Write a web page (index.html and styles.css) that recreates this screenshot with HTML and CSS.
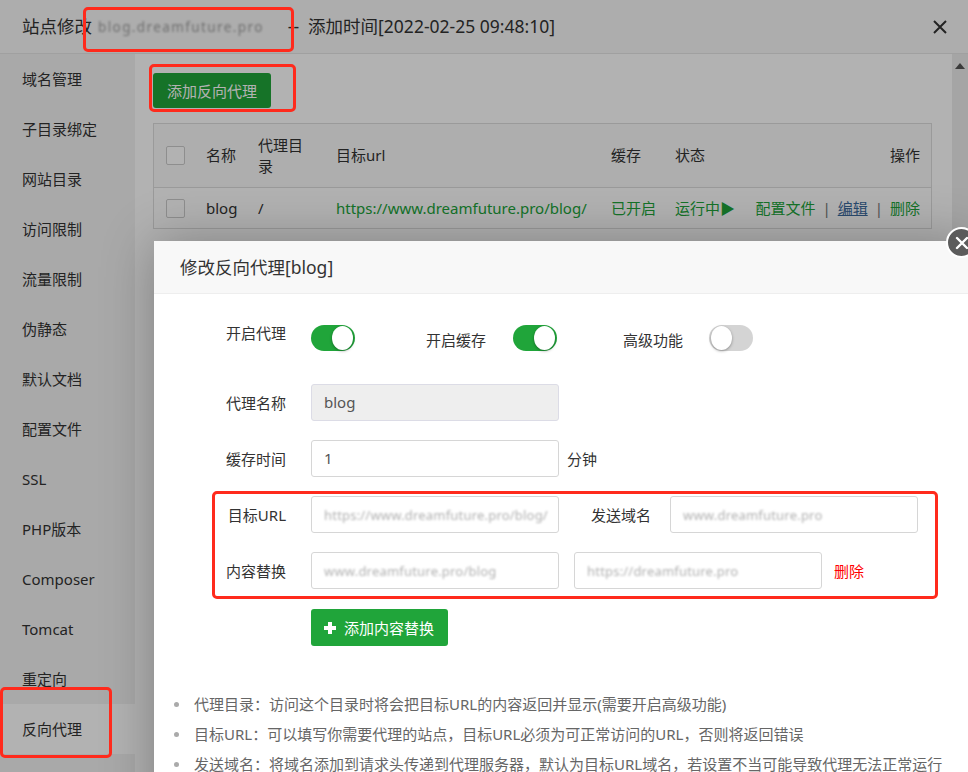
FILE: index.html
```html
<!DOCTYPE html>
<html lang="zh-CN">
<head>
<meta charset="utf-8">
<title>站点修改 - 反向代理</title>
<link rel="stylesheet" href="styles.css">
</head>
<body>
<div class="site-dialog">
  <header class="dlg-head">
    <span class="dlg-title">站点修改<span class="blur head-blur">blog.dreamfuture.pro</span>--<span class="gap"></span>添加时间[2022-02-25 09:48:10]</span>
    <svg class="dlg-close" width="16" height="16" viewBox="0 0 16 16"><path d="M2 2L14 14M14 2L2 14" stroke="#333" stroke-width="2" fill="none"/></svg>
  </header>
  <div class="dlg-main">
    <nav class="side">
      <div class="side-item">域名管理</div>
      <div class="side-item">子目录绑定</div>
      <div class="side-item">网站目录</div>
      <div class="side-item">访问限制</div>
      <div class="side-item">流量限制</div>
      <div class="side-item">伪静态</div>
      <div class="side-item">默认文档</div>
      <div class="side-item">配置文件</div>
      <div class="side-item">SSL</div>
      <div class="side-item">PHP版本</div>
      <div class="side-item">Composer</div>
      <div class="side-item">Tomcat</div>
      <div class="side-item">重定向</div>
      <div class="side-item active">反向代理</div>
    </nav>
    <section class="content">
      <button class="btn-green">添加反向代理</button>
      <div class="table">
        <div class="tr th">
          <div class="td"><span class="chk"></span></div>
          <div class="td">名称</div>
          <div class="td">代理目录</div>
          <div class="td">目标url</div>
          <div class="td">缓存</div>
          <div class="td">状态</div>
          <div class="td right">操作</div>
        </div>
        <div class="tr">
          <div class="td"><span class="chk"></span></div>
          <div class="td">blog</div>
          <div class="td">/</div>
          <div class="td green">https://www.dreamfuture.pro/blog/</div>
          <div class="td green">已开启</div>
          <div class="td green">运行中▶</div>
          <div class="td right"><span class="green">配置文件</span><span class="sep">|</span><span class="link">编辑</span><span class="sep">|</span><span class="green">删除</span></div>
        </div>
      </div>
    </section>
    <div class="scrollbar"><span class="sb-arrow"></span></div>
  </div>
</div>

<div class="shade"></div>

<div class="modal">
  <span class="modal-close"><svg width="14" height="14" viewBox="0 0 14 14"><path d="M2 2L12 12M12 2L2 12" stroke="#fff" stroke-width="2.4" fill="none" stroke-linecap="round"/></svg></span>
  <div class="modal-head">修改反向代理[blog]</div>
  <div class="modal-body">
    <div class="switch-row">
      <span class="sw-label first">开启代理</span>
      <span class="switch on"><span class="knob"></span></span>
      <span class="sw-label">开启缓存</span>
      <span class="switch on"><span class="knob"></span></span>
      <span class="sw-label">高级功能</span>
      <span class="switch off"><span class="knob"></span></span>
    </div>
    <div class="form-row">
      <label class="f-label">代理名称</label>
      <div class="input disabled">blog</div>
    </div>
    <div class="form-row">
      <label class="f-label">缓存时间</label>
      <div class="input">1</div>
      <span class="unit">分钟</span>
    </div>
    <div class="form-row">
      <label class="f-label">目标URL</label>
      <div class="input"><span class="blur in-blur">https://www.dreamfuture.pro/blog/</span></div>
      <label class="f-label2">发送域名</label>
      <div class="input"><span class="blur in-blur">www.dreamfuture.pro</span></div>
    </div>
    <div class="form-row">
      <label class="f-label">内容替换</label>
      <div class="input"><span class="blur in-blur">www.dreamfuture.pro/blog</span></div>
      <div class="input second"><span class="blur in-blur">https://dreamfuture.pro</span></div>
      <span class="del">删除</span>
    </div>
    <div class="btn-row">
      <button class="btn-add"><svg width="14" height="14" viewBox="0 0 14 14"><path d="M7 1V13M1 7H13" stroke="#fff" stroke-width="4" fill="none"/></svg>添加内容替换</button>
    </div>
    <ul class="notes">
      <li>代理目录：访问这个目录时将会把目标URL的内容返回并显示(需要开启高级功能)</li>
      <li>目标URL：可以填写你需要代理的站点，目标URL必须为可正常访问的URL，否则将返回错误</li>
      <li>发送域名：将域名添加到请求头传递到代理服务器，默认为目标URL域名，若设置不当可能导致代理无法正常运行</li>
    </ul>
  </div>
</div>

<div class="mark mark-title"></div>
<div class="mark mark-btn"></div>
<div class="mark mark-form"></div>
<div class="mark mark-side"></div>
</body>
</html>
```

FILE: styles.css
```css
* { box-sizing: border-box; }
html, body {
  margin: 0;
  padding: 0;
  width: 968px;
  height: 772px;
  overflow: hidden;
}
body {
  font-family: "Noto Sans", "Noto Sans CJK SC", sans-serif;
  font-size: 15px;
  color: #333;
  background: #fff;
  position: relative;
}

/* ---------- outer site dialog ---------- */
.site-dialog {
  height: 772px;
  display: flex;
  flex-direction: column;
  background: #fff;
}
.dlg-head {
  height: 54px;
  flex: none;
  background: #f8f8f8;
  border-bottom: 1px solid #e5e5e5;
  display: flex;
  align-items: center;
  justify-content: space-between;
  padding: 0 20px 0 22px;
}
.dlg-title {
  font-size: 17.5px;
  line-height: 24px;
  color: #333;
  white-space: nowrap;
}
.blur {
  display: inline-block;
  filter: blur(0.8px);
  color: #a0a0a0;
}
.head-blur {
  font-size: 13.5px;
  letter-spacing: 1.4px;
  margin: 0 24px 0 6px;
  vertical-align: 1px;
}
.gap {
  display: inline-block;
  width: 9px;
}

.dlg-main {
  flex: 1;
  display: flex;
  min-height: 0;
}
.side {
  width: 135px;
  flex: none;
  background: #f2f2f2;
}
.side-item {
  height: 50px;
  line-height: 51px;
  padding-left: 22px;
  font-size: 15px;
  color: #333;
}
.side-item.active { background: #fff; }

.content {
  flex: 1;
  padding: 19px 20px 0 18px;
}
.btn-green {
  display: block;
  height: 35px;
  width: 118px;
  border: 0;
  border-radius: 3px;
  background: #20a53a;
  color: #fff;
  font-family: inherit;
  font-size: 15px;
  padding: 0;
}
.table {
  margin-top: 15px;
  border: 1px solid #ddd;
  width: 779px;
}
.tr {
  display: grid;
  grid-template-columns: 40px 52px 78px 275px 64px 84px 1fr;
  border-top: 1px solid #ddd;
  align-items: center;
  min-height: 41px;
}
.tr.th {
  border-top: 0;
  background: #fafafa;
  min-height: 63px;
}
.td {
  padding: 0 9px 0 12px;
  line-height: 21px;
}
.tr .td:nth-child(2) { white-space: nowrap; }
.tr:not(.th) .td { white-space: nowrap; }
.td.right { text-align: right; padding: 0 11px 0 0; }
.chk {
  display: block;
  width: 19px;
  height: 19px;
  border: 1px solid #ccc;
  border-radius: 2px;
  background: #fff;
}
.green { color: #20a53a; }
.link { color: #3c6a9e; text-decoration: underline; }
.sep { color: #777; margin: 0 7px; }

.scrollbar {
  width: 16px;
  flex: none;
  background: #ececec;
  display: flex;
  justify-content: center;
  padding-top: 9px;
}
.sb-arrow {
  width: 0;
  height: 0;
  border-left: 5px solid transparent;
  border-right: 5px solid transparent;
  border-bottom: 6px solid #555;
}

/* ---------- shade ---------- */
.shade {
  position: absolute;
  inset: 0;
  background: rgba(0, 0, 0, 0.3);
}

/* ---------- modal ---------- */
.modal {
  position: absolute;
  left: 154px;
  top: 241px;
  width: 820px;
  height: 620px;
  background: #fff;
  box-shadow: 1px 1px 50px rgba(0, 0, 0, 0.3);
}
.modal-close {
  position: absolute;
  left: 792px;
  top: -14px;
  width: 31px;
  height: 31px;
  border-radius: 50%;
  background: #5c5c5c;
  border: 2px solid #fff;
  display: flex;
  align-items: center;
  justify-content: center;
}
.modal-head {
  height: 53px;
  line-height: 52px;
  background: #f8f8f8;
  border-bottom: 1px solid #eee;
  padding-left: 26px;
  font-size: 17.5px;
  color: #333;
}
.modal-body {
  padding: 31px 0 0 0;
}
.switch-row {
  display: flex;
  height: 26px;
  padding-left: 72px;
}
.sw-label {
  align-self: flex-end;
  line-height: 22px;
  font-size: 15px;
  color: #333;
  width: 60px;
  white-space: nowrap;
}
.sw-label.first {
  align-self: flex-start;
  line-height: 16px;
}
.switch {
  width: 44px;
  height: 26px;
  border-radius: 13px;
  display: flex;
  align-items: center;
  padding: 0 2px;
}
.switch.on { background: #20a53a; justify-content: flex-end; }
.switch.off { background: #d4d4d4; justify-content: flex-start; }
.knob {
  width: 21px;
  height: 24px;
  border-radius: 50%;
  background: #fff;
  box-shadow: 0 1px 3px rgba(0, 0, 0, 0.35);
}
.sw-label.first { margin-right: 25px; }
.switch:nth-of-type(2) { margin-right: 71px; }
.switch:nth-of-type(2) + .sw-label { margin-right: 27px; }
.switch:nth-of-type(4) { margin-right: 66px; }
.switch:nth-of-type(4) + .sw-label { margin-right: 26px; }

.form-row {
  display: flex;
  align-items: center;
  height: 37px;
  margin-top: 19px;
  padding-left: 42px;
}
.switch-row + .form-row { margin-top: 33px; }
.f-label {
  width: 90px;
  text-align: right;
  margin-right: 25px;
  font-size: 15px;
  color: #333;
  white-space: nowrap;
}
.input {
  width: 248px;
  height: 37px;
  border: 1px solid #d6d6d6;
  border-radius: 3px;
  padding-left: 12px;
  line-height: 35px;
  font-size: 15px;
  color: #555;
  background: #fff;
  white-space: nowrap;
  overflow: hidden;
}
.input.disabled {
  background: #eee;
  border-color: #dcdce6;
}
.input.second { margin-left: 15px; }
.in-blur {
  font-size: 13px;
  letter-spacing: 0.2px;
  color: #b0b0b0;
}
.unit { margin-left: 8px; color: #333; }
.f-label2 {
  margin-left: 32px;
  margin-right: 19px;
  color: #333;
  white-space: nowrap;
}
.del { margin-left: 12px; color: #f00; }

.btn-row {
  margin-top: 20px;
  padding-left: 157px;
}
.btn-add {
  height: 37px;
  width: 137px;
  border: 0;
  border-radius: 3px;
  background: #20a53a;
  color: #fff;
  font-family: inherit;
  font-size: 15px;
  display: flex;
  align-items: center;
  gap: 7px;
  padding: 0 0 0 12px;
}

.notes {
  list-style: none;
  margin: 43px 0 0 0;
  padding: 0 0 0 40px;
}
.notes li {
  position: relative;
  line-height: 30px;
  font-size: 15px;
  color: #666;
  white-space: nowrap;
}
.notes li::before {
  content: "";
  position: absolute;
  left: -20px;
  top: 13px;
  width: 5px;
  height: 5px;
  border-radius: 50%;
  background: #aaa;
}

/* ---------- red annotation marks ---------- */
.mark {
  position: absolute;
  border: 3px solid #ff2a1c;
  border-radius: 5px;
}
.mark-title { left: 83px; top: 7px; width: 211px; height: 45px; }
.mark-btn { left: 149px; top: 64px; width: 147px; height: 48px; }
.mark-form { left: 212px; top: 491px; width: 726px; height: 108px; }
.mark-side { left: 0; top: 687px; width: 112px; height: 71px; }
```
